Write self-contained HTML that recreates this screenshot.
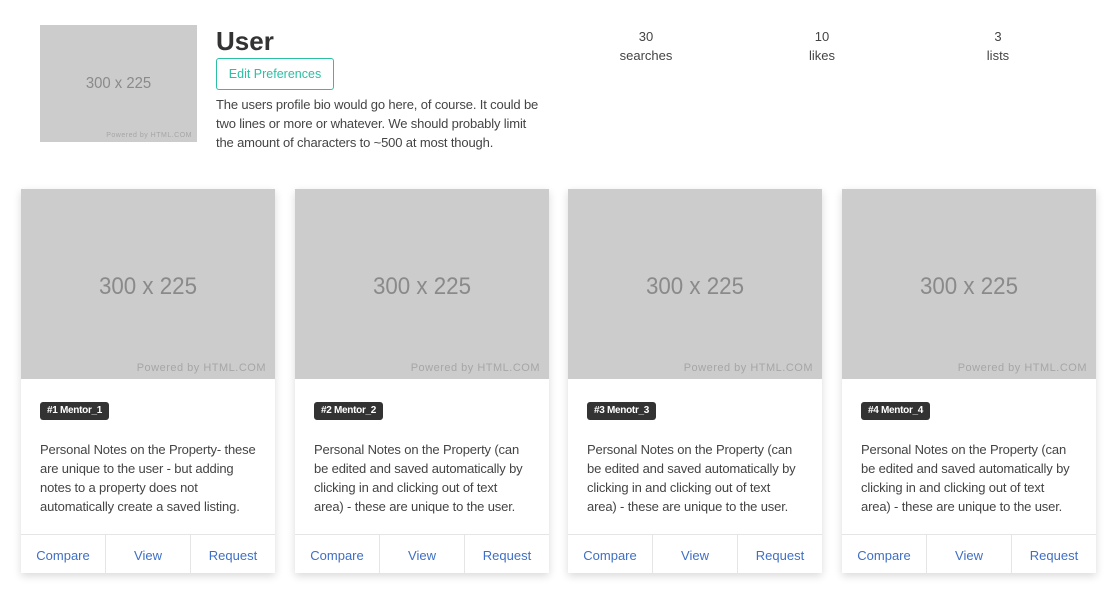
<!DOCTYPE html>
<html><head><style>
body{margin:0;background:#fff;font-family:"Liberation Sans",sans-serif;color:#333;width:1115px;height:601px;overflow:hidden;position:relative}
.ph{background:#ccc;position:absolute;color:#8a8a8a}
.ph .t{position:absolute;width:100%;text-align:center;transform:scaleX(0.93)}
.ph .p{position:absolute;right:9px;color:#a6a6a6;letter-spacing:0.5px}
.stat{position:absolute;top:27px;width:120px;text-align:center;font-size:13px;line-height:19px;color:#444}
.card{position:absolute;top:189px;width:254px;height:384px;background:#fff;box-shadow:0 3px 8px rgba(0,0,0,.15)}
.card .ph{left:0;top:0;width:254px;height:190px}
.badge{position:absolute;left:19px;top:213px;background:#333;color:#fff;font-size:10px;font-weight:bold;padding:3px 7px;border-radius:3px;line-height:12px;letter-spacing:-0.3px}
.txt{position:absolute;left:19px;top:251px;width:240px;font-size:13px;line-height:19px;color:#444;letter-spacing:-0.15px;white-space:nowrap}
.foot{position:absolute;left:0;top:345px;width:254px;height:39px;border-top:1px solid #e5e5e5;display:flex}
.foot div{flex:1;text-align:center;line-height:42px;font-size:13px;color:#3f6fc4;border-left:1px solid #e5e5e5}
.foot div:first-child{border-left:none}
</style></head><body>
<div class="ph" style="left:40px;top:25px;width:157px;height:117px">
 <div class="t" style="top:50px;font-size:16px">300 x 225</div>
 <div class="p" style="bottom:3px;right:5px;font-size:7px">Powered by HTML.COM</div>
</div>
<div style="position:absolute;left:216px;top:26px;font-size:26px;font-weight:bold;color:#333">User</div>
<div style="position:absolute;left:216px;top:58px;width:116px;height:30px;border:1px solid #2bbfa4;border-radius:3px;color:#2bbfa4;font-size:12.5px;line-height:31px;text-align:center">Edit Preferences</div>
<div style="position:absolute;left:216px;top:95px;width:340px;font-size:13px;line-height:19px;color:#444;letter-spacing:-0.15px">The users profile bio would go here, of course. It could be<br>two lines or more or whatever. We should probably limit<br>the amount of characters to ~500 at most though.</div>
<div class="stat" style="left:586px">30<br>searches</div>
<div class="stat" style="left:762px">10<br>likes</div>
<div class="stat" style="left:938px">3<br>lists</div>

<div class="card" style="left:21px"><div class="ph"><div class="t" style="top:84px;font-size:24px">300 x 225</div><div class="p" style="bottom:5px;font-size:11px">Powered by HTML.COM</div></div>
<div class="badge">#1 Mentor_1</div><div class="txt">Personal Notes on the Property- these<br>are unique to the user - but adding<br>notes to a property does not<br>automatically create a saved listing.</div>
<div class="foot"><div>Compare</div><div>View</div><div>Request</div></div></div>

<div class="card" style="left:295px"><div class="ph"><div class="t" style="top:84px;font-size:24px">300 x 225</div><div class="p" style="bottom:5px;font-size:11px">Powered by HTML.COM</div></div>
<div class="badge">#2 Mentor_2</div><div class="txt">Personal Notes on the Property (can<br>be edited and saved automatically by<br>clicking in and clicking out of text<br>area) - these are unique to the user.</div>
<div class="foot"><div>Compare</div><div>View</div><div>Request</div></div></div>

<div class="card" style="left:568px"><div class="ph"><div class="t" style="top:84px;font-size:24px">300 x 225</div><div class="p" style="bottom:5px;font-size:11px">Powered by HTML.COM</div></div>
<div class="badge">#3 Menotr_3</div><div class="txt">Personal Notes on the Property (can<br>be edited and saved automatically by<br>clicking in and clicking out of text<br>area) - these are unique to the user.</div>
<div class="foot"><div>Compare</div><div>View</div><div>Request</div></div></div>

<div class="card" style="left:842px"><div class="ph"><div class="t" style="top:84px;font-size:24px">300 x 225</div><div class="p" style="bottom:5px;font-size:11px">Powered by HTML.COM</div></div>
<div class="badge">#4 Mentor_4</div><div class="txt">Personal Notes on the Property (can<br>be edited and saved automatically by<br>clicking in and clicking out of text<br>area) - these are unique to the user.</div>
<div class="foot"><div>Compare</div><div>View</div><div>Request</div></div></div>
</body></html>
